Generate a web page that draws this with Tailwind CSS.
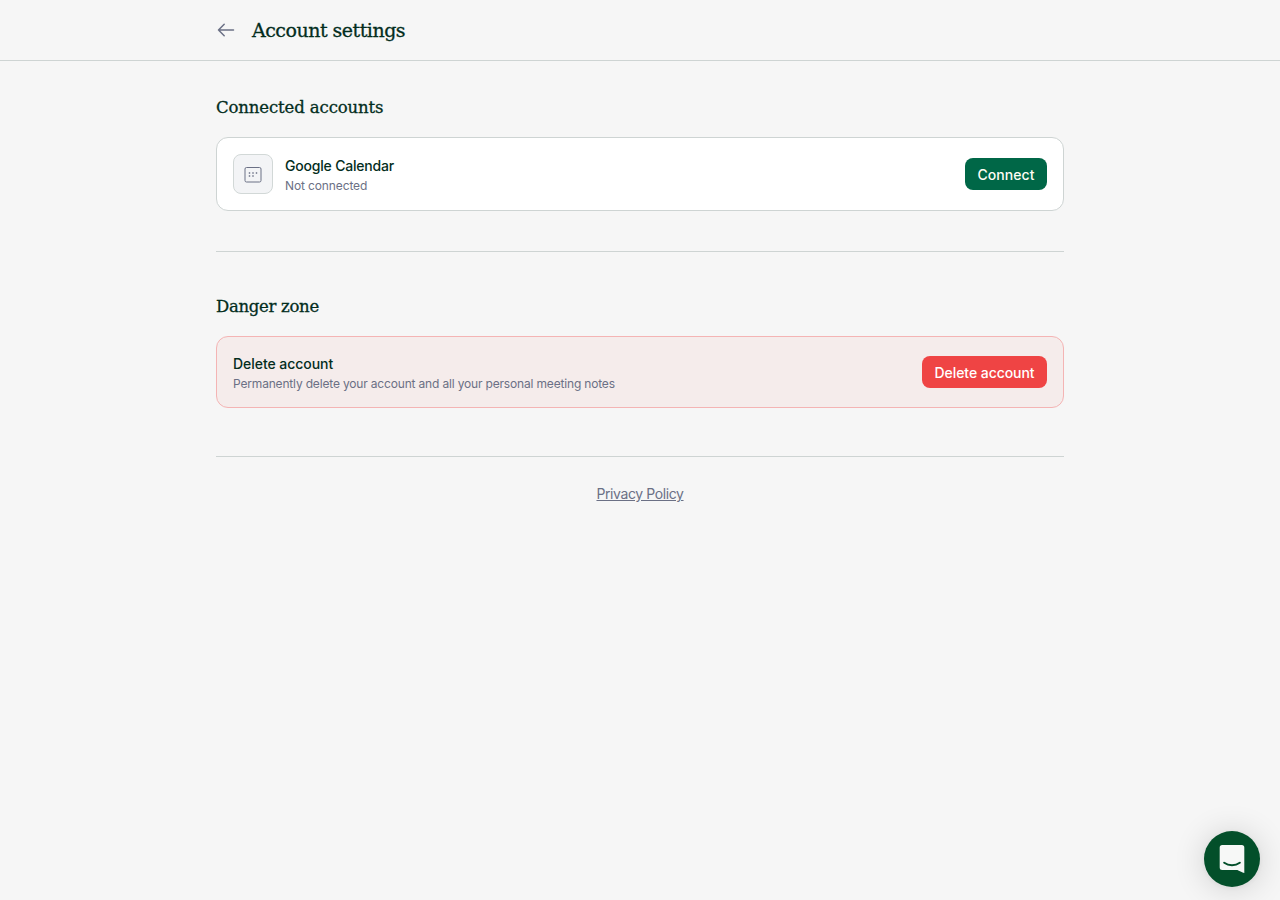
<!DOCTYPE html>
<html lang="en">
<head>
    <meta charset="UTF-8">
    <meta name="viewport" content="width=device-width, initial-scale=1.0">
    <title>Account settings</title>
    <script src="https://cdn.jsdelivr.net/npm/@tailwindcss/browser@4"></script>
</head>
<body class="min-h-screen bg-[#f6f6f6] font-['Inter',sans-serif] text-[#032d1d]">
    <!-- Header -->
    <header class="border-b border-[#ced4d3]">
        <div class="mx-auto flex h-15 max-w-4xl items-center gap-4 px-6">
            <a href="#" aria-label="Back">
                <svg class="size-5" viewBox="0 0 20 20" fill="none" stroke="#6b7085" stroke-width="1.5" stroke-linecap="round" stroke-linejoin="round">
                    <path d="M17.5 10H2.5M8.2 4.2L2.5 10l5.7 5.8"/>
                </svg>
            </a>
            <h1 class="font-['DejaVu_Serif',serif] text-[19px] leading-[26px] tracking-[-0.5px] whitespace-nowrap [-webkit-text-stroke:0.3px]">Account settings</h1>
        </div>
    </header>

    <main class="mx-auto max-w-4xl px-6 pt-8">
        <!-- Connected accounts -->
        <section>
            <h2 class="mb-4 pt-0.5 font-['DejaVu_Serif',serif] text-[16.5px] leading-[26px] tracking-[-0.12px] [-webkit-text-stroke:0.3px]">Connected accounts</h2>
            <div class="flex items-center justify-between rounded-xl border border-[#ced4d3] bg-white p-4">
                <div class="flex items-center gap-3">
                    <div class="flex size-10 items-center justify-center rounded-lg border border-[#d2d8d7] bg-[#f3f4f6]">
                        <svg class="size-5" viewBox="0 0 20 20" fill="none" stroke="#6b7085">
                            <rect x="2" y="3.5" width="16" height="14.5" rx="1.5"/>
                            <path d="M5.8 9h1.4M9.3 9h1.4M12.8 9h1.4M5.8 12h1.4M9.3 12h1.4" stroke-width="1.4"/>
                        </svg>
                    </div>
                    <div>
                        <p class="pt-0.5 text-sm leading-[18px] font-medium tracking-[-0.2px]">Google Calendar</p>
                        <p class="mt-0.5 pt-0.5 text-xs leading-3.5 tracking-[-0.12px] text-[#6b7085]">Not connected</p>
                    </div>
                </div>
                <button class="flex h-8 w-[82px] items-center justify-center rounded-lg bg-[#006747] pt-0.5 text-sm font-medium tracking-[0.05px] text-[#fffdf5]">Connect</button>
            </div>
        </section>

        <hr class="my-10 border-[#ced4d3]">

        <!-- Danger zone -->
        <section>
            <h2 class="mb-4 pt-0.5 font-['DejaVu_Serif',serif] text-[16.5px] leading-[26px] tracking-[-0.3px] [-webkit-text-stroke:0.3px]">Danger zone</h2>
            <div class="flex items-center justify-between rounded-xl border border-[#f4b4b4] bg-[#f5eceb] p-4">
                <div>
                    <p class="pt-0.5 text-sm leading-[18px] font-medium tracking-[-0.05px]">Delete account</p>
                    <p class="mt-0.5 pt-0.5 text-xs leading-3.5 tracking-[-0.17px] text-[#6b7085]">Permanently delete your account and all your personal meeting notes</p>
                </div>
                <button class="flex h-8 w-[125px] items-center justify-center rounded-lg bg-[#ef4444] pt-0.5 text-sm font-medium tracking-[-0.05px] text-white">Delete account</button>
            </div>
        </section>

        <footer class="mt-12 border-t border-[#ced4d3] pt-[27px] text-center text-sm tracking-[-0.4px] text-[#6b7085]">
            <a href="#" class="underline">Privacy Policy</a>
        </footer>
    </main>

    <!-- Chat launcher -->
    <button aria-label="Open chat" class="fixed right-5 bottom-[13px] flex size-14 items-center justify-center rounded-full bg-[#034f2a] shadow-[0_1px_6px_rgba(0,0,0,0.06),0_2px_32px_rgba(0,0,0,0.16)]">
        <svg class="h-8 w-7" viewBox="0 0 28 32">
            <path d="M26.3 30s-4.7-1.7-6.9-3H4.2A2.5 2.5 0 0 1 1.7 24.5V4.5A2.5 2.5 0 0 1 4.2 2h19.6A2.5 2.5 0 0 1 26.3 4.5z" fill="#f7f8f7"/>
            <path d="M6.2 19.7c4.6 3.3 11 3.3 15.6 0" fill="none" stroke="#034f2a" stroke-width="2" stroke-linecap="round"/>
        </svg>
    </button>
</body>
</html>
